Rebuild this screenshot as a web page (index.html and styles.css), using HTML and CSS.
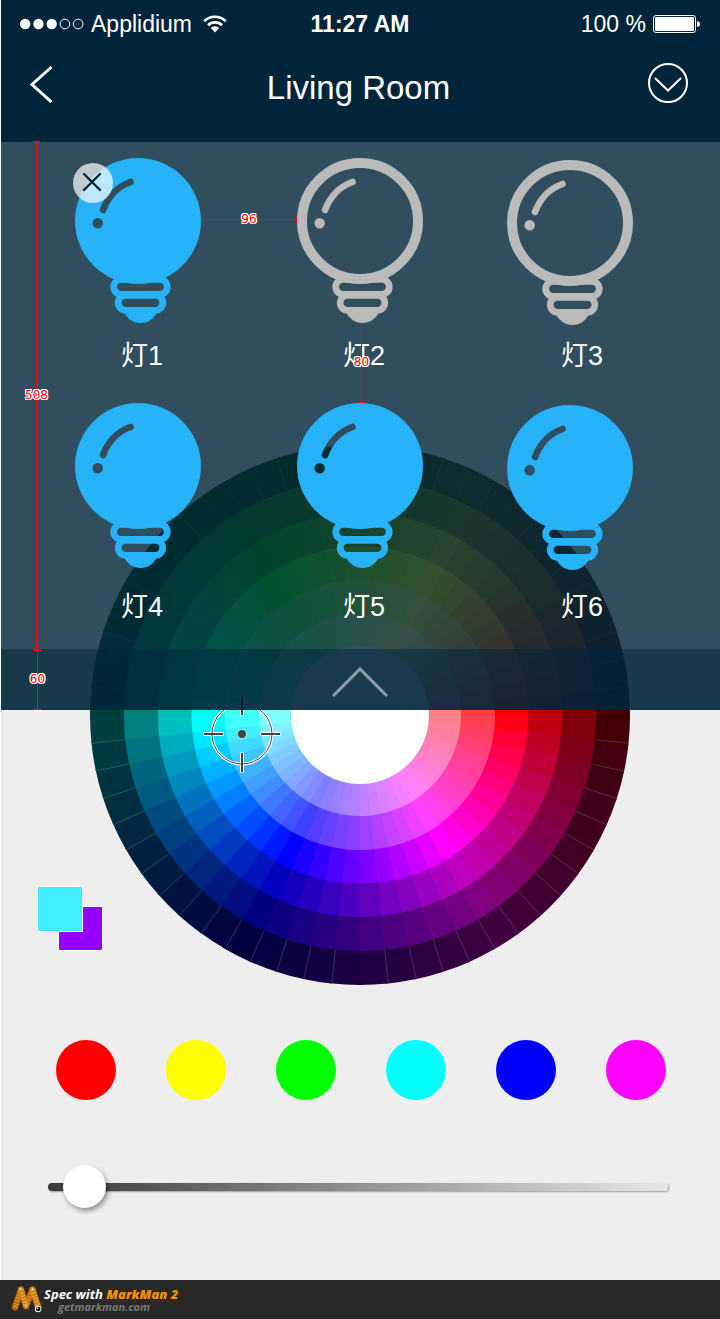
FILE: index.html
```
<!DOCTYPE html>
<html lang="zh">
<head>
<meta charset="utf-8">
<meta name="viewport" content="width=device-width, initial-scale=1">
<title>Living Room</title>
<link rel="stylesheet" href="styles.css">
</head>
<body>
<svg class="sprite" aria-hidden="true">
  <defs>
    <mask id="bulb-cutout" maskUnits="userSpaceOnUse" x="0" y="0" width="126" height="166">
      <rect width="126" height="166" fill="#fff"/>
      <path d="M55.500 24Q36 31 28 52" fill="none" stroke="#000" stroke-width="6.600" stroke-linecap="round"/>
      <circle cx="22.700" cy="65.300" r="5.200" fill="#000"/>
    </mask>
    <symbol id="bulb-base" viewBox="0 0 126 166">
      <rect x="38.700" y="121.400" width="53.600" height="15" rx="7.500" fill="none" stroke="currentColor" stroke-width="6.700"/>
      <rect x="43.200" y="137.300" width="44.600" height="15" rx="7.500" fill="none" stroke="currentColor" stroke-width="6.700"/>
      <path d="M48.500 153C52 161 58 165 65.500 165S79 161 82.500 153z" fill="currentColor"/>
    </symbol>
    <symbol id="bulb-on" viewBox="0 0 126 166">
      <circle cx="63" cy="63" r="63" fill="currentColor" mask="url(#bulb-cutout)"/>
      <use href="#bulb-base" width="126" height="166"/>
    </symbol>
    <symbol id="bulb-off" viewBox="0 0 126 166">
      <circle cx="63" cy="63" r="58" fill="none" stroke="currentColor" stroke-width="10"/>
      <path d="M55.500 24Q36 31 28 52" fill="none" stroke="currentColor" stroke-width="6.600" stroke-linecap="round"/>
      <circle cx="22.700" cy="65.300" r="5.200" fill="currentColor"/>
      <use href="#bulb-base" width="126" height="166"/>
    </symbol>
  </defs>
</svg>

<div class="screen">
  <header class="header">
    <div class="status">
      <div class="status-left">
        <svg width="64" height="12" viewBox="0 0 64 12" aria-hidden="true">
          <g fill="#fff"><circle cx="5.200" cy="6" r="5.200"/><circle cx="18.500" cy="6" r="5.200"/><circle cx="31.700" cy="6" r="5.200"/></g>
          <g fill="none" stroke="#fff"><circle cx="44.900" cy="6" r="4.800"/><circle cx="58.200" cy="6" r="4.800"/></g>
        </svg>
        <span class="carrier">Applidium</span>
        <svg class="wifi" width="24" height="18" viewBox="0 0 24 18" aria-hidden="true">
          <g fill="none" stroke="#fff" stroke-width="2.600"><path d="M1.200 6.200A15.500 15.500 0 0 1 22.800 6.200"/><path d="M5 10.200A10 10 0 0 1 19 10.200"/></g>
          <path d="M7.800 13A6 6 0 0 1 16.200 13L12 17.500z" fill="#fff"/>
        </svg>
      </div>
      <time class="clock">11:27 AM</time>
      <div class="status-right">
        <span>100 %</span>
        <svg width="47" height="18" viewBox="0 0 47 18" aria-hidden="true">
          <rect x=".5" y=".5" width="42" height="17" rx="2.500" fill="none" stroke="#fff"/>
          <rect x="2" y="2" width="39" height="14" rx="1" fill="#fff"/>
          <path d="M44 6Q47 6.500 47 9T44 12z" fill="#fff"/>
        </svg>
      </div>
    </div>
    <nav class="nav">
      <button class="icon-button" type="button" aria-label="Back">
        <svg width="24" height="40" viewBox="0 0 24 40"><path d="M22.500 4L3 21.500L22.500 39" fill="none" stroke="#fff" stroke-width="3"/></svg>
      </button>
      <h1 class="title">Living Room</h1>
      <button class="icon-button icon-button--end" type="button" aria-label="Choose room">
        <svg width="40" height="40" viewBox="0 0 40 40"><g fill="none" stroke="#fff" stroke-width="2"><circle cx="20" cy="20" r="19"/><path d="M7 15L20 27.500L33 15"/></g></svg>
      </button>
    </nav>
  </header>

  <main class="stage">
    <section class="lights-panel" aria-label="Lights">
      <ul class="lights">
        <li class="light">
          <button class="light-toggle is-on" type="button" aria-pressed="true"><svg class="bulb" viewBox="0 0 126 166" aria-hidden="true"><use href="#bulb-on"/></svg><span class="light-name">灯1</span></button>
          <button class="light-remove" type="button" aria-label="Remove 灯1"><svg width="40" height="40" viewBox="0 0 40 40"><path d="M11 11L27 27M27 11L11 27" stroke="#00253a" stroke-width="2.400" stroke-linecap="round"/></svg></button>
        </li>
        <li class="light"><button class="light-toggle" type="button" aria-pressed="false"><svg class="bulb" viewBox="0 0 126 166" aria-hidden="true"><use href="#bulb-off"/></svg><span class="light-name">灯2</span></button></li>
        <li class="light"><button class="light-toggle" type="button" aria-pressed="false"><svg class="bulb" viewBox="0 0 126 166" aria-hidden="true"><use href="#bulb-off"/></svg><span class="light-name">灯3</span></button></li>
        <li class="light"><button class="light-toggle is-on" type="button" aria-pressed="true"><svg class="bulb" viewBox="0 0 126 166" aria-hidden="true"><use href="#bulb-on"/></svg><span class="light-name">灯4</span></button></li>
        <li class="light"><button class="light-toggle is-on" type="button" aria-pressed="true"><svg class="bulb" viewBox="0 0 126 166" aria-hidden="true"><use href="#bulb-on"/></svg><span class="light-name">灯5</span></button></li>
        <li class="light"><button class="light-toggle is-on" type="button" aria-pressed="true"><svg class="bulb" viewBox="0 0 126 166" aria-hidden="true"><use href="#bulb-on"/></svg><span class="light-name">灯6</span></button></li>
      </ul>
      <button class="collapse" type="button" aria-label="Collapse lights">
        <svg width="56" height="30" viewBox="0 0 56 30"><path d="M1 29L28 2L55 29" fill="none" stroke="#fff" stroke-opacity=".5" stroke-width="3"/></svg>
      </button>
      <div class="measure measure--v measure--panel"><span>508</span></div>
      <div class="measure measure--v measure--bar"><span>60</span></div>
      <div class="measure measure--h measure--column"><span>96</span></div>
      <div class="measure measure--v measure--row"><span>80</span></div>
    </section>

    <section class="picker" aria-label="Colour">
      <svg class="wheel" viewBox="0 0 540 540" role="img" aria-label="Colour wheel">
        <g id="wheel-segments"></g>
        <g class="target" transform="translate(152 289)">
          <g fill="none" stroke="#fff" stroke-width="4"><circle r="30" stroke-width="3"/><path d="M-38.500 0H-18.500M18.500 0H38.500M0 -38.500V-18.500M0 18.500V38.500"/></g>
          <g fill="none" stroke="#444" stroke-width="2"><circle r="30" stroke-width="1"/><path d="M-38 0H-19M19 0H38M0 -38V-19M0 19V38"/></g>
          <circle r="4.500" fill="#444" stroke="#fff" stroke-opacity=".6"/>
        </g>
      </svg>
      <div class="swatches" aria-label="Selected colours">
        <span class="swatch swatch--previous"></span>
        <span class="swatch swatch--current"></span>
      </div>
    </section>

    <div class="presets">
      <button class="preset preset--red" type="button" aria-label="Red"></button>
      <button class="preset preset--yellow" type="button" aria-label="Yellow"></button>
      <button class="preset preset--green" type="button" aria-label="Green"></button>
      <button class="preset preset--cyan" type="button" aria-label="Cyan"></button>
      <button class="preset preset--blue" type="button" aria-label="Blue"></button>
      <button class="preset preset--magenta" type="button" aria-label="Magenta"></button>
    </div>

    <div class="brightness">
      <input class="slider" type="range" min="0" max="1000" value="26" aria-label="Brightness">
    </div>
  </main>
</div>

<footer class="footer">
  <svg class="footer-logo" width="33" height="30" viewBox="0 0 33 30" aria-hidden="true">
    <g fill="none" stroke-linecap="round" stroke-linejoin="round">
      <path d="M4 22.500L10 4.500L15 21L21.500 4.500L27.500 23" stroke="#5c3206" stroke-width="7.400"/>
      <path d="M4 22.500L10 4.500M15 21L21.500 4.500" stroke="#b06a14" stroke-width="6"/>
      <path d="M4 22.500L10 4.500M15 21L21.500 4.500" stroke="#d58f2b" stroke-width="5" stroke-linecap="butt" stroke-dasharray="1.500 1.500"/>
      <path d="M10 4.500L15 21M21.500 4.500L27.500 23" stroke="#c87a18" stroke-width="6"/>
      <path d="M10 4.500L15 21M21.500 4.500L27.500 23" stroke="#e6a440" stroke-width="5" stroke-linecap="butt" stroke-dasharray="1.500 1.500"/>
    </g>
    <g fill="#ffe9b8"><circle cx="9.500" cy="3.800" r="1"/><circle cx="21.500" cy="3.800" r="1"/><circle cx="15" cy="21" r="1"/></g>
    <circle cx="27" cy="24" r="3.200" fill="#fff"/><circle cx="27.200" cy="24" r="2.300" fill="#111"/><circle cx="26.400" cy="23.300" r=".8" fill="#fff"/>
  </svg>
  <div class="footer-text">
    <p class="footer-line">Spec with <strong>MarkMan 2</strong></p>
    <p class="footer-site">getmarkman.com</p>
  </div>
</footer>
<script src="wheel.js"></script>
</body>
</html>
```

FILE: styles.css
```
* {
  box-sizing: border-box;
}

body {
  margin: 0;
  background: #fff;
  font-family: "Liberation Sans", "Noto Sans CJK SC", sans-serif;
}

button {
  padding: 0;
  border: 0;
  background: none;
  color: inherit;
  font: inherit;
  cursor: pointer;
}

svg {
  display: block;
}

.sprite {
  position: absolute;
  width: 0;
  height: 0;
}

.screen {
  padding-left: 1px;
}

/* Header */

.header {
  background: #00253a;
  color: #fff;
}

.status {
  display: grid;
  grid-template-columns: 1fr auto 1fr;
  align-items: center;
  height: 48px;
  padding: 0 20px 0 19px;
  font-size: 23px;
  line-height: 28px;
}

.status-left,
.status-right {
  display: flex;
  align-items: center;
  gap: 7px;
}

.status-right {
  justify-content: flex-end;
}

.wifi {
  margin-left: 4px;
}

.clock {
  font-weight: 700;
}

.nav {
  display: grid;
  grid-template-columns: 1fr auto 1fr;
  align-items: center;
  height: 94px;
  padding: 0 32px 24px 28px;
}

.icon-button {
  justify-self: start;
}

.icon-button--end {
  justify-self: end;
}

.title {
  margin: 0;
  padding-top: 10px;
  font-size: 33px;
  font-weight: 400;
  line-height: 40px;
}

/* Light panel, drawn over the colour picker */

.stage {
  position: relative;
  background: #eee;
  padding-bottom: 71px;
}

.lights-panel {
  position: absolute;
  z-index: 1;
  top: 0;
  left: 0;
  right: 0;
}

.lights {
  display: grid;
  grid-template-columns: 222fr 210fr 213fr;
  grid-template-rows: 214px 220px;
  row-gap: 31px;
  margin: 0;
  padding: 16px 0 26px 74px;
  background: rgba(0, 37, 58, 0.8);
  list-style: none;
}

.light {
  position: relative;
  display: flex;
}

.light-toggle {
  display: flex;
  flex-direction: column;
  justify-content: space-between;
  align-items: flex-start;
  color: #bababa;
}

.light-toggle.is-on {
  color: #27b3f9;
}

.bulb {
  width: 126px;
  height: 166px;
}

.light-name {
  padding-left: 46px;
  color: #fff;
  font-size: 27px;
  line-height: 32px;
}

/* The last column sits lower and its names reach further right */
.light:nth-child(3n) .bulb {
  margin-top: 2px;
}

.light:nth-child(3n) .light-name {
  padding-left: 54px;
}

.light-remove {
  position: absolute;
  top: 5px;
  left: -2px;
  border-radius: 50%;
  background: rgba(255, 255, 255, 0.7);
}

.collapse {
  display: flex;
  justify-content: center;
  align-items: center;
  width: 100%;
  height: 61px;
  padding: 4px 1px 0 0;
  background: rgba(0, 37, 58, 0.9);
}

/* Dimension marks */

.measure {
  position: absolute;
  display: flex;
  justify-content: center;
  align-items: center;
  color: #f00;
  font-family: "DejaVu Sans", sans-serif;
  font-size: 12px;
  line-height: 14px;
  pointer-events: none;
}

.measure span {
  padding-bottom: 2px;
  text-shadow: -1px -1px #fff, 0 -1px #fff, 1px -1px #fff, -1px 0 #fff, 1px 0 #fff, -1px 1px #fff, 0 1px #fff, 1px 1px #fff;
}

.measure--v {
  width: 7px;
  border-top: 1px solid #f00;
  border-bottom: 1px solid #f00;
  background: linear-gradient(#f00, #f00) center / 1px 100% no-repeat;
}

.measure--h {
  height: 7px;
  border-left: 1px solid #f00;
  border-right: 1px solid #f00;
  background: linear-gradient(#f00, #f00) center / 100% 1px no-repeat;
}

.measure--panel {
  top: -1px;
  left: 32px;
  height: 509px;
  background-size: 2px 100%;
}

.measure--bar {
  top: 508px;
  left: 33px;
  height: 60px;
}

.measure--column {
  top: 74px;
  left: 200px;
  width: 96px;
}

.measure--row {
  top: 181px;
  left: 357px;
  height: 80px;
}

/* Colour picker */

.picker {
  display: grid;
  padding: 303px 1px 0 0;
}

.wheel,
.swatches {
  grid-area: 1 / 1;
}

.wheel {
  justify-self: center;
  width: 540px;
  max-width: 100%;
}

.swatches {
  display: grid;
  align-self: end;
  justify-self: start;
  grid-template-columns: 21px 25px 20px;
  grid-template-rows: 20px 26px 19px;
  margin: 0 0 34px 36px;
}

.swatch {
  border: 1px solid #fff;
}

.swatch--previous {
  grid-area: 2 / 2 / 4 / 4;
  background: #9600ff;
}

.swatch--current {
  grid-area: 1 / 1 / 3 / 3;
  background: #40edff;
}

.presets {
  display: flex;
  justify-content: space-between;
  padding: 55px 54px 0 55px;
}

.preset {
  width: 60px;
  height: 60px;
  border-radius: 50%;
}

.preset--red { background: #f00; }
.preset--yellow { background: #ff0; }
.preset--green { background: #0f0; }
.preset--cyan { background: #0ff; }
.preset--blue { background: #00f; }
.preset--magenta { background: #f0f; }

.brightness {
  padding: 65px 52px 0 47px;
}

.slider {
  display: block;
  width: 100%;
  height: 44px;
  margin: 0;
  background: none;
  -webkit-appearance: none;
  appearance: none;
}

.slider::-webkit-slider-runnable-track {
  height: 8px;
  border-radius: 4px;
  background: linear-gradient(90deg, #3a3a3a, #e8e8e8);
  box-shadow: 1px 1px 2px rgba(0, 0, 0, 0.35);
}

.slider::-webkit-slider-thumb {
  width: 43px;
  height: 43px;
  margin-top: -18px;
  border-radius: 50%;
  background: #fff;
  box-shadow: 2px 3px 5px rgba(0, 0, 0, 0.4);
  -webkit-appearance: none;
  appearance: none;
}

/* Footer */

.footer {
  display: flex;
  align-items: center;
  height: 39px;
  padding-left: 11px;
  background: #282828;
  font-family: "Open Sans", sans-serif;
  font-style: italic;
  font-weight: 700;
}

.footer p {
  margin: 0;
}

.footer-line {
  color: #fff;
  font-size: 13px;
  line-height: 14px;
}

.footer-line strong {
  color: #f78f0a;
}

.footer-site {
  padding-left: 14px;
  color: #787878;
  font-size: 11px;
  line-height: 12px;
}
```

FILE: wheel.js
```
// Draws the colour wheel: sixty hues on six rings around a white centre.
const NS = "http://www.w3.org/2000/svg";
const group = document.getElementById("wheel-segments");
const CENTER = 270;
const STEP = 6;
const rings = [
  { radius: 270, lightness: 12.5 },
  { radius: 236, lightness: 25 },
  { radius: 202, lightness: 37.5 },
  { radius: 168.5, lightness: 50 },
  { radius: 135, lightness: 62.5 },
  { radius: 101, lightness: 75 },
];

function add(name, attributes) {
  const node = document.createElementNS(NS, name);
  for (const key in attributes) node.setAttribute(key, attributes[key]);
  group.appendChild(node);
}

function point(radius, degrees) {
  const angle = (degrees * Math.PI) / 180;
  return (CENTER + radius * Math.cos(angle)).toFixed(2) + " " + (CENTER + radius * Math.sin(angle)).toFixed(2);
}

rings.forEach(({ radius, lightness }, index) => {
  add("circle", { cx: CENTER, cy: CENTER, r: radius - 1, fill: "#444" });
  for (let start = 0; start < 360; start += STEP) {
    const end = start + STEP + (start < 354 ? 0.4 : 0);
    add("path", {
      d: `M${CENTER} ${CENTER}L${point(radius, start)}A${radius} ${radius} 0 0 1 ${point(radius, end)}z`,
      fill: `hsl(${354 - start} 100% ${lightness}%)`,
    });
  }
  if (index === 0) {
    for (let angle = 0; angle < 360; angle += STEP) {
      if (angle % 90 === 0) continue;
      add("path", { d: `M${point(236, angle)}L${point(270, angle)}`, stroke: "#fff", "stroke-opacity": 0.18 });
    }
  }
});
add("circle", { cx: CENTER, cy: CENTER, r: 69, fill: "#fff" });
```
